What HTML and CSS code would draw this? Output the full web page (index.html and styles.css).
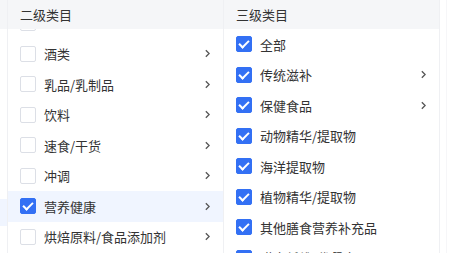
FILE: index.html
```html
<!DOCTYPE html>
<html lang="zh-CN">
<head>
  <meta charset="UTF-8" />
  <title>类目选择</title>
  <link rel="stylesheet" href="styles.css">
</head>
<body>
  <div class="picker">
    <div class="col col-stub">
      <div class="col-head"></div>
      <div class="col-body">
        <div class="stub-active"></div>
      </div>
    </div>

    <div class="col col-mid">
      <div class="col-head">二级类目</div>
      <div class="col-body">
        <ul class="list scrolled">
          <li class="item"><span class="box"></span><span class="label"></span></li>
          <li class="item"><span class="box"></span><span class="label">酒类</span><svg class="arrow" viewBox="0 0 6 10"><path d="M1 1l4 4-4 4"/></svg></li>
          <li class="item"><span class="box"></span><span class="label">乳品/乳制品</span><svg class="arrow" viewBox="0 0 6 10"><path d="M1 1l4 4-4 4"/></svg></li>
          <li class="item"><span class="box"></span><span class="label">饮料</span><svg class="arrow" viewBox="0 0 6 10"><path d="M1 1l4 4-4 4"/></svg></li>
          <li class="item"><span class="box"></span><span class="label">速食/干货</span><svg class="arrow" viewBox="0 0 6 10"><path d="M1 1l4 4-4 4"/></svg></li>
          <li class="item"><span class="box"></span><span class="label">冲调</span><svg class="arrow" viewBox="0 0 6 10"><path d="M1 1l4 4-4 4"/></svg></li>
          <li class="item active"><span class="box checked"></span><span class="label">营养健康</span><svg class="arrow" viewBox="0 0 6 10"><path d="M1 1l4 4-4 4"/></svg></li>
          <li class="item"><span class="box"></span><span class="label">烘焙原料/食品添加剂</span><svg class="arrow" viewBox="0 0 6 10"><path d="M1 1l4 4-4 4"/></svg></li>
        </ul>
      </div>
    </div>

    <div class="col col-mid">
      <div class="col-head">三级类目</div>
      <div class="col-body">
        <ul class="list">
          <li class="item"><span class="box checked"></span><span class="label">全部</span></li>
          <li class="item"><span class="box checked"></span><span class="label">传统滋补</span><svg class="arrow" viewBox="0 0 6 10"><path d="M1 1l4 4-4 4"/></svg></li>
          <li class="item"><span class="box checked"></span><span class="label">保健食品</span><svg class="arrow" viewBox="0 0 6 10"><path d="M1 1l4 4-4 4"/></svg></li>
          <li class="item"><span class="box checked"></span><span class="label">动物精华/提取物</span></li>
          <li class="item"><span class="box checked"></span><span class="label">海洋提取物</span></li>
          <li class="item"><span class="box checked"></span><span class="label">植物精华/提取物</span></li>
          <li class="item"><span class="box checked"></span><span class="label">其他膳食营养补充品</span></li>
          <li class="item"><span class="box checked"></span><span class="label">膳食纤维/代餐食品</span></li>
        </ul>
      </div>
    </div>

    <div class="col col-tail"></div>
  </div>
</body>
</html>
```

FILE: styles.css
```css
body {
  margin: 0;
  background: #fff;
  font-family: "Noto Sans CJK SC", "Noto Sans", sans-serif;
  color: #333;
  font-size: 13px;
}

.picker {
  display: flex;
  height: 253px;
  overflow: hidden;
}

.col {
  display: flex;
  flex-direction: column;
  border-right: 1px solid #eff0f3;
}

.col-head {
  height: 29px;
  line-height: 29px;
  background: #f5f6f8;
  padding-left: 12px;
  color: #333;
  flex-shrink: 0;
}

.col-body {
  flex: 1;
  overflow: hidden;
}

.col-stub {
  width: 7px;
}

.col-stub .col-head {
  padding: 0;
}

.stub-active {
  margin-top: 170px;
  height: 27px;
  background: #f0f5ff;
}

.col-mid {
  width: 215px;
}

.col-tail {
  width: 6px;
  border-right: 1px solid #f6f6f8;
}

.list {
  list-style: none;
  margin: 0;
  padding: 0;
}

.list.scrolled {
  margin-top: -21px;
}

.item {
  display: flex;
  align-items: center;
  height: 30.5px;
  padding: 0 12px;
}

.item.active {
  background: #f0f5ff;
}

.box {
  width: 14px;
  height: 14px;
  border: 1px solid #dcdfe6;
  border-radius: 2px;
  background: #fff;
  flex-shrink: 0;
  position: relative;
}

.box.checked {
  background: #3370f4;
  border-color: #3370f4;
}

.box.checked::after {
  content: "";
  position: absolute;
  left: 4px;
  top: 1px;
  width: 4px;
  height: 8px;
  border: solid #fff;
  border-width: 0 2px 2px 0;
  transform: rotate(45deg);
}

.label {
  margin-left: 8px;
  flex: 1;
  white-space: nowrap;
}

.arrow {
  width: 5px;
  height: 9px;
  margin-right: 1px;
  fill: none;
  stroke: #555;
  stroke-width: 1.6;
  flex-shrink: 0;
}
```
